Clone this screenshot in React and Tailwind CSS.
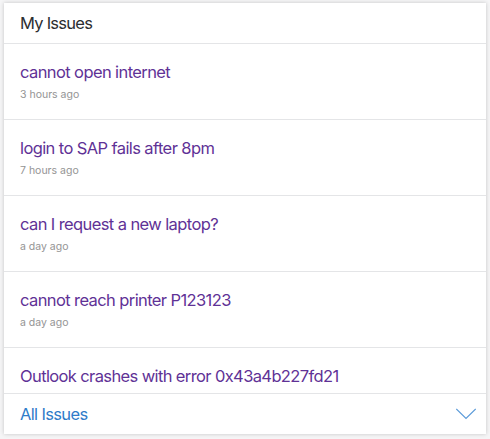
const issues = [
  ["cannot open internet", "3 hours ago"],
  ["login to SAP fails after 8pm", "7 hours ago"],
  ["can I request a new laptop?", "a day ago"],
  ["cannot reach printer P123123", "a day ago"],
];

export default function App() {
  return (
    <div className="w-[490px] h-[439px] bg-[#f5f5f6] pt-[3px] px-[4px] overflow-hidden font-['Inter',sans-serif]">
      <div className="h-[431px] bg-white flex flex-col shadow-[0_0_4px_rgba(0,0,0,0.2)]">
        <div className="h-[41px] shrink-0 flex items-center px-4 pt-[1px] text-[16.5px] tracking-[-0.75px] text-[#2c2e31] border-b border-[#e4e5e7]">
          My Issues
        </div>
        <div className="flex-1 min-h-0 overflow-hidden">
          {issues.map(([title, time]) => (
            <div key={title} className="h-[76px] px-4 pt-[16px] border-b border-[#e4e5e7]">
              <div className="text-[16.5px] leading-[24px] tracking-[-0.6px] text-[#5f3296]">{title}</div>
              <div className="mt-[3px] text-[10.5px] leading-[16px] tracking-[0px] text-[#949494]">{time}</div>
            </div>
          ))}
          <div className="px-4 pt-[16px] text-[16.5px] leading-[24px] tracking-[-0.62px] text-[#5f3296]">
            Outlook crashes with error 0x43a4b227fd21
          </div>
        </div>
        <div className="h-[41px] shrink-0 flex items-center justify-between pl-4 pr-[10px] border-t border-[#e4e5e7]">
          <span className="text-[16.5px] tracking-[-0.65px] text-[#2f7cc9]">All Issues</span>
          <svg width="20" height="12" viewBox="0 0 20 12" fill="none" stroke="#5b9bd9" strokeWidth="1.2">
            <path d="M0.3 1l9.7 9.5L19.7 1" />
          </svg>
        </div>
      </div>
    </div>
  );
}
